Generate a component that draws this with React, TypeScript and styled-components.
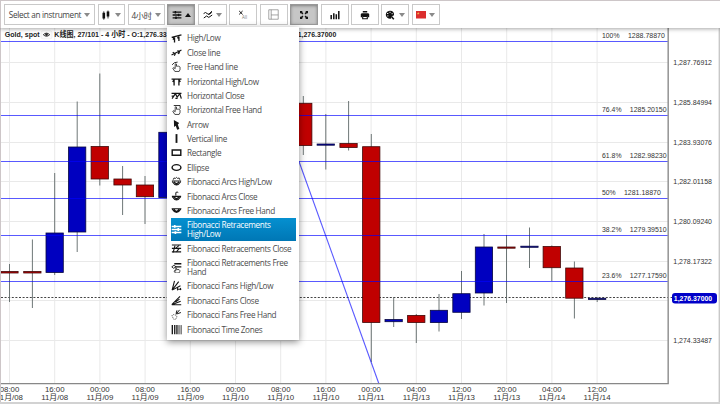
import React from 'react';
import styled, { createGlobalStyle, css } from 'styled-components';

const GlobalStyle = createGlobalStyle`
  * { box-sizing: border-box; }
  body { margin: 0; background: #fff; overflow: hidden; }
`;

const Page = styled.div`
  position: relative;
  width: 720px;
  height: 404px;
  display: flex;
  flex-direction: column;
  overflow: hidden;
  background: #fff;
  font-family: 'Open Sans', 'Noto Sans CJK SC', sans-serif;
`;

const Toolbar = styled.header`
  position: relative;
  z-index: 1;
  flex: 0 0 28px;
  display: flex;
  align-items: flex-start;
  gap: 2.5px;
  padding: 3px 0 0 3px;
  background: #fff;
  border-top: 1px solid #cdc6c8;
  border-left: 1px solid #cdc6c8;
  box-shadow: 0 1px 4px rgba(0, 0, 0, 0.35);
`;

const ToolButton = styled.button<{ $w: number; $active?: boolean }>`
  width: ${(p) => p.$w}px;
  height: 21px;
  padding: 0;
  display: flex;
  align-items: center;
  justify-content: center;
  gap: 3px;
  border: 1px solid #c9c9c9;
  background: #fff;
  color: #444;
  font: 8.2px 'Open Sans', 'Noto Sans CJK SC', sans-serif;
  letter-spacing: -0.32px;
  white-space: nowrap;
  ${(p) =>
    p.$active &&
    css`
      background: #c6c6c6;
      border-color: #989898;
      box-shadow: inset 0 1px 3px rgba(0, 0, 0, 0.35);
    `}
`;

const Caret = styled.i<{ $up?: boolean }>`
  border-left: 3px solid transparent;
  border-right: 3px solid transparent;
  ${(p) => (p.$up ? 'border-bottom: 4px solid #111;' : 'border-top: 4px solid #8a8a8a;')}
`;

const Menu = styled.ul`
  position: absolute;
  z-index: 2;
  left: 167px;
  top: 27px;
  width: 132px;
  height: 313px;
  margin: 0;
  padding: 4px 3px 0 4px;
  list-style: none;
  background: #fff;
  box-shadow: 0 2px 7px rgba(0, 0, 0, 0.45);
`;

const MenuItem = styled.li<{ $h: number; $selected?: boolean }>`
  height: ${(p) => p.$h}px;
  display: flex;
  align-items: center;
  gap: 5px;
  color: ${(p) => (p.$selected ? '#fff' : '#4c4c4c')};
  ${(p) => p.$selected && 'background: linear-gradient(#0590d0, #0077b5);'}
  svg { color: ${(p) => (p.$selected ? '#fff' : '#151515')}; flex: none; }
`;

const MenuLabel = styled.span`
  font-size: 8.2px;
  line-height: 9.4px;
  letter-spacing: -0.33px;
  white-space: pre;
`;

const Chart = styled.svg`
  flex: 1;
  display: block;
  width: 720px;
  height: 376px;
  font-family: 'Liberation Sans', 'Noto Sans CJK SC', sans-serif;
`;

const Glyph = styled.svg`
  display: block;
  fill: none;
  stroke: currentColor;
  stroke-width: 1.2;
`;

const hand = (
  <path d="M3.5 9.5 1.6 6.6l1-.6 1.2 1V2.8q.6-.8 1.2 0v2q.6-.7 1.1.1.7-.6 1.1.2.8-.3 1 .5v2.2L7.4 9.5z" strokeWidth=".7" />
);
const smallHand = <path d="M4 10 2.7 8.2l.6-.5 1 .6V5.8h.8v1.1h2.2l.7.7v1.2L7.2 10z" strokeWidth=".7" />;
const levels = (
  <>
    <path d="M.6 2.2h8.8M.6 5h8.8M.6 7.8h8.8" strokeWidth="1.3" />
    <path d="M3.4 .9v2.6M6.6 3.7v2.6M4 6.5v2.6" strokeWidth="1.5" />
  </>
);

const icons: Record<string, React.ReactNode> = {
  highLow: <path d="M.6 3.9 9.5 1.8M3.2 3.5v5.2M7.2 2.6v4.6M1.8 6 3.2 3.8M5.9 4.8 7.2 2.9" strokeWidth="1.2" />,
  closeLine: <path d="M.5 7.2 9.5 2.8M1.6 4.8 4 6.6M3 8l1.4-2.8M6 3l1.8 2.8M6.4 6.4 8 3.6" strokeWidth="1.1" />,
  freeHand: (
    <>
      {hand}
      <path d="M1 3.5 3 1.6 6 1" strokeWidth=".8" />
    </>
  ),
  horizHighLow: <path d="M.5 2.8h9M2.8 3v5.6M7.2 3v5.6M1.5 5.4 2.8 3.4M8.5 5.4 7.2 3.4" strokeWidth="1.2" />,
  horizClose: <path d="M.5 3h9M1 7.8 4 3.4l1.6 3L8 3.4l1.4 4.4M.6 5.6h1.8M4 7.6h2" strokeWidth="1.1" />,
  horizFree: (
    <>
      {hand}
      <path d="M2.5 1.4h5.8v3" strokeWidth=".8" />
    </>
  ),
  arrow: <path d="M2.6.8 7.4 3.6 6.2 4.9 7.6 9 5.6 9.7 4.3 6.2 2.8 7.2z" fill="currentColor" stroke="none" />,
  vertical: <path d="M5 1v8" strokeWidth="1.7" />,
  rectangle: <path d="M1.1 2.7h7.8v4.8H1.1z" strokeWidth="1.3" />,
  ellipse: <ellipse cx="5" cy="5" rx="4" ry="2.6" strokeWidth="1.3" />,
  arcsHighLow: (
    <>
      <path d="M.8 4.6h8.4M1.2 5.2Q5 11 8.8 5.2M2.8 5.4q2.2 3 4.4 0" strokeWidth="1" />
      <path d="M2 3.4Q2.4.8 4 2.2 5 .4 6 2.2 7.8.8 8 3.4" strokeWidth=".8" />
    </>
  ),
  arcsClose: (
    <>
      <path d="M.8 4.8h8.4M1.2 5.2Q5 11 8.8 5.2M2.8 5.4q2.2 3 4.4 0" strokeWidth="1.1" />
      <path d="M4.4 4.2V1.4q1.2-1 2.2 0" strokeWidth=".9" />
    </>
  ),
  arcsFree: <path d="M.6 3.4h8.8M1.2 3.8q3.8 6 7.6 0M2.8 4q2.2 3.4 4.4 0" strokeWidth="1.1" />,
  retracements: levels,
  retrClose: (
    <>
      <path d="M.8 1.8h8.4M.8 4.8h8.4M.8 8h8.4" strokeWidth="1.1" />
      <path d="M2 8.5 3.6 2.3M4.4 4.6l3-2.4M5 8l2.6-3.4" strokeWidth="1" />
    </>
  ),
  retrFree: (
    <>
      <path d="M3 1.6h6.4M4 4.4h5.4" />
      <path d="M.7 4.4 2.7 3l2 1.4-2.4 1.3z" strokeWidth=".8" />
      {smallHand}
    </>
  ),
  fansHighLow: (
    <>
      <path d="M1 9.2 3.2.8M1 9.2 7 1.4M1 9.2l7.6-4" strokeWidth="1" />
      <path d="M5.4 8.4h4M6 6.5v3M8.6 7.2v2" strokeWidth=".9" />
    </>
  ),
  fansClose: <path d="M.7 8.8h8.6M.7 8.8 8.8 5.6M.7 8.8 8.2 1.2M4 6.5l3.7-2.7" strokeWidth="1" />,
  fansFree: (
    <>
      <path d="M4.6 4.2 5.4 1.2M4.8 4.4 7.8.8M5 4.6 9 3.2" strokeWidth=".9" />
      <path d="M.8 6.2 2 5l2.6.6.8 1.5-.8 2-2 .4z" strokeWidth=".6" strokeDasharray="1 .7" />
    </>
  ),
  timeZones: (
    <>
      <path d="M1.2 1v8.4M3.4 1v8.4M5.4 1v8.4" strokeWidth="1.2" />
      <path d="M7.3 1v8.4M9.2 1v8.4" strokeWidth=".8" />
    </>
  ),
  candles: (
    <>
      <path d="M2.8 1.3v8.4M7 .5v8" strokeWidth=".8" />
      <path d="M2.8 2.8v5.6M7 1.6v5" strokeWidth="2.6" />
    </>
  ),
  trend: <path d="M.6 3.6q2-2.2 3.6 0t4.6-1.2M.8 8 3.6 6 5.8 7.4 9.2 5M5.4 4.6 9 1.2" strokeWidth="1" />,
  layout: <path d="M.7.7h8.6v8.6H.7zM2.9.7v8.6M2.9 5.4h6.4" stroke="#777" strokeWidth=".6" />,
  expand: (
    <>
      <path d="M1 3.8V1h2.8zM9 3.8V1H6.2zM1 6.2V9h2.8zM9 6.2V9H6.2z" fill="currentColor" stroke="none" />
      <path d="m1.5 1.5 2.4 2.4M8.5 1.5 6.1 3.9M1.5 8.5l2.4-2.4M8.5 8.5 6.1 6.1" strokeWidth="1.5" />
    </>
  ),
  volume: <path d="M1.2 5v4.2M3.8 3.2v6M6.3 4.2v5M8.8 1v8.2" strokeWidth="1.5" />,
  print: (
    <>
      <path d="M2.8 1h4.4v1.6H2.8zM1.8 3.2h6.4l1 .9v3.1H8V6H2v1.2H.8V4.1z" fill="currentColor" stroke="none" />
      <path d="M2.7 6.4h4.6v2.3H2.7z" strokeWidth="1.1" />
    </>
  ),
  palette: (
    <>
      <path d="M4.8.8C7.6.6 9.4 2.6 9 5 8.8 6 7.4 5.8 6.6 6c-.8.5-.2 1.4-.5 2.4C5 9.7 1 8.1.8 5 .7 2.8 2.4 1 4.8.8z" fill="currentColor" stroke="none" />
      <path d="M2.1 3.5h1.2M4.5 2.3h1.1M6.6 3.7h1.1M2.3 5.9h1.1" stroke="#fff" strokeWidth="1" />
      <path d="m6.2 6.2 2.6 3" strokeWidth="1.5" />
    </>
  ),
};

const Icon = ({ name, size = 10 }: { name: string; size?: number }) => (
  <Glyph width={size} height={size} viewBox="0 0 10 10">
    {icons[name]}
  </Glyph>
);

const Ink = styled.span<{ $gap?: number }>`
  color: #111;
  margin-right: ${(p) => p.$gap ?? 0}px;
`;

const ClearMark = () => (
  <Glyph width="12" height="12" viewBox="0 0 12 12">
    <path d="m2.2 2 3.4 3.4M5.6 2 2.2 5.4" strokeWidth="1" />
    <text x="5" y="9.6" fontSize="4.4" fill="#777" stroke="none" letterSpacing="0">All</text>
  </Glyph>
);

const Flag = () => (
  <svg width="10" height="8" viewBox="0 0 10 8">
    <rect width="10" height="7.5" fill="#db2d2d" />
    <path d="m2.2 1 .4.9h1l-.8.6.3 1-.9-.6-.9.6.3-1-.8-.6h1z" fill="#f4c34a" />
  </svg>
);

const menuItems: { icon: string; label: string; h?: number; selected?: boolean }[] = [
  { icon: 'highLow', label: 'High/Low' },
  { icon: 'closeLine', label: 'Close line' },
  { icon: 'freeHand', label: 'Free Hand line' },
  { icon: 'horizHighLow', label: 'Horizontal High/Low' },
  { icon: 'horizClose', label: 'Horizontal Close' },
  { icon: 'horizFree', label: 'Horizontal Free Hand' },
  { icon: 'arrow', label: 'Arrow' },
  { icon: 'vertical', label: 'Vertical line' },
  { icon: 'rectangle', label: 'Rectangle' },
  { icon: 'ellipse', label: 'Ellipse' },
  { icon: 'arcsHighLow', label: 'Fibonacci Arcs High/Low' },
  { icon: 'arcsClose', label: 'Fibonacci Arcs Close', h: 15 },
  { icon: 'arcsFree', label: 'Fibonacci Arcs Free Hand', h: 14.2 },
  { icon: 'retracements', label: 'Fibonacci Retracements\nHigh/Low', h: 23, selected: true },
  { icon: 'retrClose', label: 'Fibonacci Retracements Close', h: 15.5 },
  { icon: 'retrFree', label: 'Fibonacci Retracements Free\nHand', h: 22 },
  { icon: 'fansHighLow', label: 'Fibonacci Fans High/Low', h: 14.6 },
  { icon: 'fansClose', label: 'Fibonacci Fans Close' },
  { icon: 'fansFree', label: 'Fibonacci Fans Free Hand', h: 15 },
  { icon: 'timeZones', label: 'Fibonacci Time Zones', h: 14.6 },
];

// centre x, body top, body bottom, wick top, wick bottom, rising
const candles: [number, number, number, number, number, boolean][] = [
  [9.5, 271.5, 273, 264, 302, false],
  [32.4, 271.5, 273, 239.5, 308, false],
  [54.7, 233, 272.5, 173, 275, true],
  [77.2, 147, 232, 101.5, 252, true],
  [99.8, 146.5, 179, 73.5, 185.5, false],
  [122.6, 179, 185, 166, 215, false],
  [145, 185, 196.7, 176, 224, false],
  [167.5, 132.3, 197.5, 125, 200, true],
  [303.3, 103.3, 145.5, 96, 155, false],
  [325.8, 144, 145.2, 114, 169.5, true],
  [348.6, 143.5, 147.5, 101, 150.5, false],
  [371.3, 146.7, 322.5, 134, 362, false],
  [393.7, 319.5, 321.7, 297, 327, true],
  [416.3, 315.4, 322.5, 314, 343, false],
  [439, 310.3, 322.6, 294, 331.5, true],
  [461.5, 293.7, 312.3, 271, 319, true],
  [484, 247, 293, 234, 305.5, true],
  [506.5, 247, 248.2, 235, 303, false],
  [529.5, 246.2, 247.3, 227.5, 268, true],
  [551.8, 246.5, 267.7, 245.5, 281, false],
  [574.4, 268, 298.2, 261.5, 318.5, false],
  [597.2, 298.3, 299.4, 297, 302, true],
];

const gridRows = [62.5, 102.5, 142.5, 181.5, 221.5, 261.5, 300.5, 340.5];
const prices = ['1,287.76912', '1,285.84994', '1,283.93076', '1,282.01158', '1,280.09240', '1,278.17322', '', '1,274.33487'];

const fibLevels: [number, string, string, number][] = [
  [41.5, '100%', '1288.78870', 628],
  [115.5, '76.4%', '1285.20150', 629.8],
  [161.5, '61.8%', '1282.98230', 629.8],
  [198.5, '50%', '1281.18870', 624],
  [235.5, '38.2%', '1279.39510', 629.8],
  [281.5, '23.6%', '1277.17590', 629.8],
];

const ticks: [string, string][] = [
  ['08:00', '08'], ['16:00', '08'], ['00:00', '09'], ['08:00', '09'], ['16:00', '09'],
  ['00:00', '10'], ['08:00', '10'], ['16:00', '10'], ['00:00', '11'], ['04:00', '13'],
  ['12:00', '13'], ['20:00', '13'], ['04:00', '14'], ['12:00', '14'],
];
const tickX = (i: number) => 9.5 + i * 45.2;

const Fit = ({ x, y, w, children }: { x: number; y: number; w: number; children: string }) => (
  <text x={x} y={y} textLength={w} lengthAdjust="spacingAndGlyphs">{children}</text>
);

const PriceChart = () => (
  <Chart viewBox="0 28 720 376">
    <g stroke="#e9e9e9" strokeWidth="1">
      {ticks.map((_, i) => <path key={i} d={`M${tickX(i)} 28V383`} />)}
      {gridRows.map((y) => <path key={y} d={`M1 ${y}H668`} />)}
    </g>
    <path d="M1 297.5H672" stroke="#444" strokeWidth="1" strokeDasharray="2 1.6" />
    {candles.map(([x, top, bottom, high, low, up]) => (
      <g key={x}>
        <path d={`M${x} ${high}V${low}`} stroke="#5d6868" strokeWidth=".9" />
        <rect x={x - 8.7} y={top} width="17.3" height={bottom - top} fill={up ? '#0000c0' : '#c00000'} stroke={up ? '#080840' : '#400808'} strokeWidth=".8" />
      </g>
    ))}
    <g stroke="#0000ff" strokeWidth="1.1" strokeOpacity=".65" fill="none">
      {fibLevels.map(([y]) => <path key={y} d={`M1 ${y}H668`} />)}
      <path d="M299 161.5 379 384" />
    </g>
    <path d="M668.2 28V383.6" stroke="#999" strokeWidth="1.6" />
    <path d="M1 383.6H668.8" stroke="#888" strokeWidth="1.2" />
    <g fontSize="7.5" fill="#333">
      {fibLevels.map(([y, pct, value, x]) => (
        <g key={pct}>
          <Fit x={602} y={y - 4} w={pct.length === 5 ? 19.5 : pct.length === 4 ? 17.5 : 13.7}>{pct}</Fit>
          <Fit x={x} y={y - 4} w={36.8}>{value}</Fit>
        </g>
      ))}
      {gridRows.map((y, i) => prices[i] && <Fit key={y} x={673.3} y={y + 2.6} w={38.7}>{prices[i]}</Fit>)}
    </g>
    <rect x="672" y="293" width="45" height="10.6" rx="3" fill="#0000c8" />
    <g fontSize="7.5" fontWeight="bold" fill="#fff">
      <Fit x={673.8} y={301} w={38.4}>1,276.37000</Fit>
    </g>
    <g fontSize="8" fill="#333">
      {ticks.map(([time, day], i) => (
        <g key={i}>
          <Fit x={tickX(i) - 9.8} y={392.1} w={19.6}>{time}</Fit>
          <Fit x={tickX(i) - 13.5} y={400.4} w={27}>{`11月/${day}`}</Fit>
        </g>
      ))}
    </g>
    <g fontSize="7.7" fontWeight="bold" fill="#222">
      <Fit x={4.8} y={37} w={34.8}>Gold, spot</Fit>
      <Fit x={54.3} y={37} w={112.5}>K线图, 27/101 - 4 小时 - O:1,276.33</Fit>
      <Fit x={297.7} y={37} w={38.6}>1,276.37000</Fit>
    </g>
    <rect x="41" y="30.8" width="11" height="8" rx="2" fill="#fafafa" stroke="#e8e8e8" strokeWidth=".6" />
    <path d="M43.3 34.7q3.2-3.1 6.4 0-3.2 3.1-6.4 0z" fill="#fff" stroke="#222" strokeWidth=".9" />
    <circle cx="46.5" cy="34.6" r="1.3" fill="#222" />
    <path d="M.5 28V402.5" stroke="#cdc6c8" />
    <path d="M719.3 28V403" stroke="#c8c8c8" strokeWidth="1.4" />
    <path d="M0 403H720" stroke="#d2d2d2" strokeWidth="2" />
  </Chart>
);

export default function App() {
  return (
    <Page>
      <GlobalStyle />
      <Toolbar>
        <ToolButton $w={91}>Select an instrument<Caret /></ToolButton>
        <ToolButton $w={27.5}><Ink $gap={1}><Icon name="candles" /></Ink><Caret /></ToolButton>
        <ToolButton $w={37}>4小时<Caret /></ToolButton>
        <ToolButton $w={28} $active><Ink><Icon name="retracements" /></Ink><Caret $up /></ToolButton>
        <ToolButton $w={29}><Ink><Icon name="trend" /></Ink><Caret /></ToolButton>
        <ToolButton $w={28}><Ink><ClearMark /></Ink></ToolButton>
        <ToolButton $w={28}><Icon name="layout" size={11} /></ToolButton>
        <ToolButton $w={28} $active><Ink><Icon name="expand" /></Ink></ToolButton>
        <ToolButton $w={28}><Ink><Icon name="volume" /></Ink></ToolButton>
        <ToolButton $w={27.5}><Ink><Icon name="print" /></Ink></ToolButton>
        <ToolButton $w={28}><Ink $gap={1}><Icon name="palette" /></Ink><Caret /></ToolButton>
        <ToolButton $w={28.5}><Flag /><Caret /></ToolButton>
      </Toolbar>
      <PriceChart />
      <Menu>
        {menuItems.map((m) => (
          <MenuItem key={m.icon} $h={m.h ?? 14.35} $selected={m.selected}>
            <Icon name={m.icon} size={11} />
            <MenuLabel>{m.label}</MenuLabel>
          </MenuItem>
        ))}
      </Menu>
    </Page>
  );
}
